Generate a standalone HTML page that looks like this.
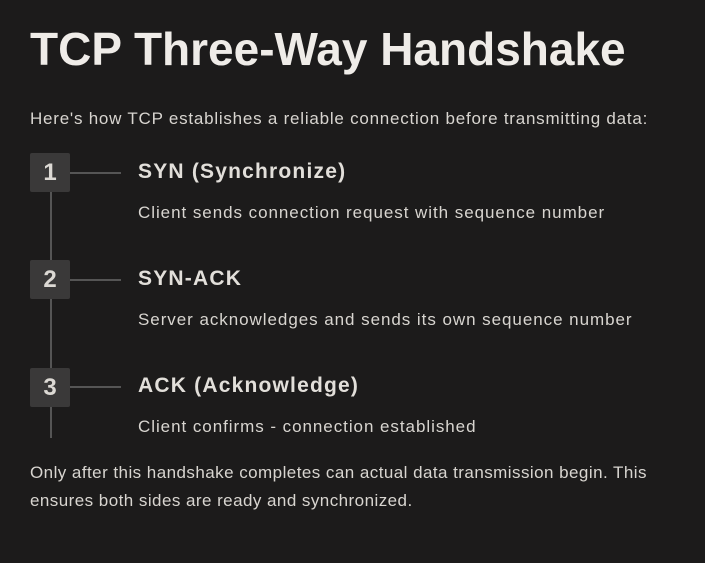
<!DOCTYPE html>
<html><head><style>
body{margin:0;width:705px;height:563px;background:#1c1b1b;color:#e2dfda;font-family:"Liberation Sans",sans-serif;position:relative;overflow:hidden}
.a{position:absolute;white-space:nowrap}
h1{position:absolute;left:30px;top:22px;margin:0;font-size:46px;font-weight:bold;letter-spacing:0px;color:#efece8}
.box{position:absolute;left:30px;width:40px;height:39px;background:#3a3939;border-radius:2px;color:#dcd9d4;font-weight:bold;font-size:24px;text-align:center;line-height:39px}
.h{position:absolute;left:70px;width:51px;height:2px;background:#555}
.t{font-size:21px;font-weight:bold;left:138px;letter-spacing:1.2px}
.d{font-size:17px;left:138px;color:#d8d5d0;letter-spacing:0.95px}
.p{font-size:17px;left:30px;color:#d8d5d0}
</style></head><body>
<h1>TCP Three-Way Handshake</h1>
<div class="a p" style="top:109px;letter-spacing:0.77px">Here's how TCP establishes a reliable connection before transmitting data:</div>
<div class="a" style="left:50px;top:192px;width:2px;height:246px;background:#555"></div>
<div class="box" style="top:153px">1</div><div class="h" style="top:172px"></div>
<div class="a t" style="top:160px">SYN (Synchronize)</div>
<div class="a d" style="top:203px">Client sends connection request with sequence number</div>
<div class="box" style="top:260px">2</div><div class="h" style="top:279px"></div>
<div class="a t" style="top:267px">SYN-ACK</div>
<div class="a d" style="top:310px">Server acknowledges and sends its own sequence number</div>
<div class="box" style="top:368px">3</div><div class="h" style="top:386px"></div>
<div class="a t" style="top:374px">ACK (Acknowledge)</div>
<div class="a d" style="top:417px">Client confirms - connection established</div>
<div class="a p" style="top:463px;letter-spacing:0.45px">Only after this handshake completes can actual data transmission begin. This</div>
<div class="a p" style="top:491px;letter-spacing:0.45px">ensures both sides are ready and synchronized.</div>
</body></html>
